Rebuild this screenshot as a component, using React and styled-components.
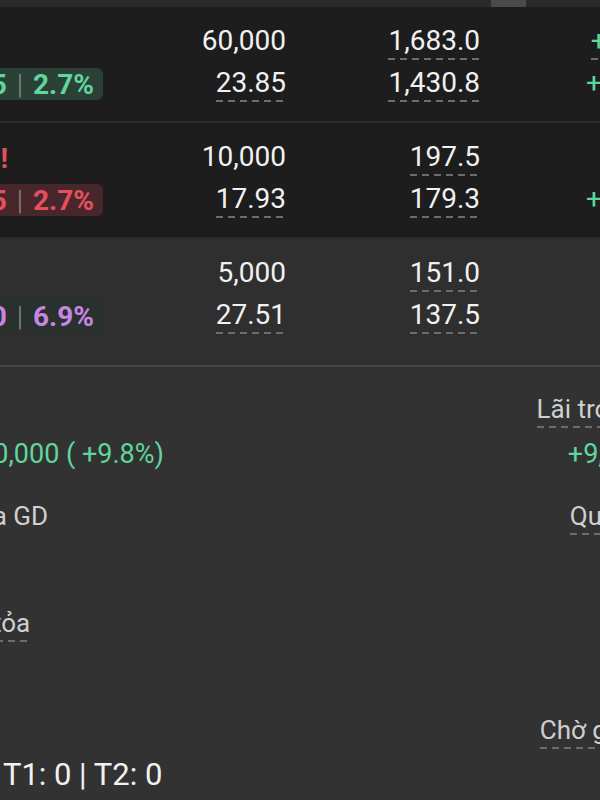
import React from 'react';
import styled, { createGlobalStyle, css } from 'styled-components';

const Global = createGlobalStyle`
  html, body { margin: 0; padding: 0; background: #323232; }
  body { font-family: Roboto, "Noto Sans", "Liberation Sans", sans-serif; overflow: hidden; }
  #root { width: 600px; height: 800px; }
`;

const tones = {
  up: { fg: '#5fd69c', bg: '#2b4036' },
  down: { fg: '#e5505d', bg: '#48272c' },
  ceil: { fg: '#c886e2', bg: '#29312e' },
};

const GREEN = '#5fd69c';

const dashed = css`
  background-image: linear-gradient(to right, #6c6c6c 0 7px, transparent 7px 12px);
  background-size: 12px 2px;
  background-repeat: repeat-x;
  background-position: left bottom;
`;

const Viewport = styled.div`
  width: 600px;
  height: 800px;
  overflow: hidden;
  background: #323232;
  color: #f1f1f1;
`;

const Canvas = styled.div`
  width: 788px;
  margin-left: -88px;
  display: flex;
  flex-direction: column;
`;

const TopStrip = styled.div`
  height: 7px;
  background: #2a2a2a;
  display: flex;
  justify-content: flex-end;
  padding-right: 174px;
`;

const ScrollThumb = styled.div`
  width: 35px;
  height: 7px;
  background: #4a4a4a;
`;

const Row = styled.div`
  display: grid;
  grid-template-columns: 191px 183px 194px 197px;
  padding: 17px 0 ${p => (p.$tall ? 31 : 19)}px;
  background: ${p => (p.$dark ? '#1d1d1d' : '#2f2f2f')};
  border-bottom: 2px solid ${p => p.$divider};
`;

const Cell = styled.div`
  display: flex;
  flex-direction: column;
  align-items: flex-end;
  gap: 6px;
  white-space: nowrap;
`;

const Num = styled.span`
  display: block;
  font-size: 28px;
  line-height: 34px;
  padding-bottom: 2px;
  color: ${p => p.$color || '#f1f1f1'};
  ${p => p.$tip && dashed}
`;

const TickerLine = styled.div`
  height: 36px;
  display: flex;
  align-items: center;
  margin-right: 95px;
`;

const Ticker = styled.span`
  font-size: 28px;
  font-weight: 700;
  color: ${p => p.$color};
`;

const Flag = styled.span`
  width: 20px;
  text-align: right;
  font-size: 28px;
  font-weight: 700;
  color: #e5505d;
`;

const Badge = styled.div`
  display: inline-flex;
  align-items: center;
  height: 32px;
  margin: 2px 0;
  padding: 0 9px;
  border-radius: 6px;
  background: ${p => p.$bg};
  color: ${p => p.$fg};
  font-size: 28px;
  font-weight: 700;
`;

const BadgeSep = styled.span`
  margin: 0 10px;
  color: #8a8a8a;
  font-weight: 300;
`;

const Summary = styled.div`
  display: grid;
  grid-template-columns: 1fr 1fr;
  padding-top: 25px;
`;

const SumCol = styled.div`
  display: flex;
  flex-direction: column;
  gap: 27px;
  align-items: ${p => (p.$right ? 'flex-end' : 'flex-start')};
`;

const Item = styled.div`
  display: flex;
  flex-direction: column;
  gap: 8px;
  align-items: inherit;
  white-space: nowrap;
`;

const Label = styled.span`
  font-size: 26px;
  line-height: 34px;
  padding-bottom: 2px;
  color: #cfcfcf;
  ${p => p.$tip && dashed}
`;

const Value = styled.span`
  font-size: ${p => p.$size || 27}px;
  line-height: 36px;
  color: ${p => p.$color || '#f1f1f1'};
`;

const rows = [
  { ticker: 'HPG', tone: 'up', change: '+0.75', pct: '2.7%', qty: '60,000', avg: '23.85', value: '1,683.0', cost: '1,430.8', pl: '+252.2', plPct: '+17.6%', dark: true, divider: '#2b2b2b' },
  { ticker: 'NVL', tone: 'down', flag: true, change: '-0.55', pct: '2.7%', qty: '10,000', avg: '17.93', value: '197.5', cost: '179.3', pl: '+18.2', plPct: '+10.2%', dark: true, divider: '#2a2a2a' },
  { ticker: 'FPT', tone: 'ceil', change: '+1.90', pct: '6.9%', qty: '5,000', avg: '27.51', value: '151.0', cost: '137.5', pl: '+13.5', plPct: '+9.8%', dark: false, tall: true, divider: '#464646' },
];

const leftItems = [
  { label: 'Lãi/lỗ', value: '+13,500,000 ( +9.8%)', color: GREEN },
  { label: 'Phí mua GD', value: '0' },
  { label: 'Phong tỏa', tip: true, value: '0' },
  { label: 'Chờ về', value: 'T0: 0 | T1: 0 | T2: 0', size: 31 },
];

const rightItems = [
  { label: 'Lãi trong ngày', tip: true, value: '+9,750,000', color: GREEN },
  { label: 'Quyền mua', tip: true, value: '0' },
  { label: 'Cổ tức', value: '0' },
  { label: 'Chờ giao mua', tip: true, value: '0' },
];

export default function App() {
  return (
    <Viewport>
      <Global />
      <Canvas>
        <TopStrip>
          <ScrollThumb />
        </TopStrip>
        {rows.map(r => {
          const t = tones[r.tone];
          return (
            <Row key={r.ticker} $dark={r.dark} $tall={r.tall} $divider={r.divider}>
              <Cell>
                <TickerLine>
                  <Ticker $color={r.tone === 'down' ? t.fg : '#f1f1f1'}>{r.ticker}</Ticker>
                  <Flag>{r.flag ? '!' : ''}</Flag>
                </TickerLine>
                <Badge $bg={t.bg} $fg={t.fg}>
                  <span>{r.change}</span>
                  <BadgeSep>|</BadgeSep>
                  <span>{r.pct}</span>
                </Badge>
              </Cell>
              <Cell>
                <Num>{r.qty}</Num>
                <Num $tip>{r.avg}</Num>
              </Cell>
              <Cell>
                <Num $tip>{r.value}</Num>
                <Num $tip>{r.cost}</Num>
              </Cell>
              <Cell>
                <Num $tip $color={GREEN}>{r.pl}</Num>
                <Num $color={GREEN}>{r.plPct}</Num>
              </Cell>
            </Row>
          );
        })}
        <Summary>
          <SumCol>
            {leftItems.map(it => (
              <Item key={it.label}>
                <Label $tip={it.tip}>{it.label}</Label>
                <Value $color={it.color} $size={it.size}>{it.value}</Value>
              </Item>
            ))}
          </SumCol>
          <SumCol $right>
            {rightItems.map(it => (
              <Item key={it.label}>
                <Label $tip={it.tip}>{it.label}</Label>
                <Value $color={it.color}>{it.value}</Value>
              </Item>
            ))}
          </SumCol>
        </Summary>
      </Canvas>
    </Viewport>
  );
}
